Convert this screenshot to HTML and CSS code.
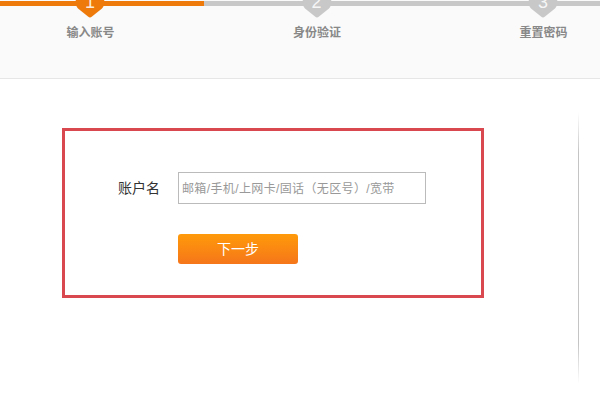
FILE: index.html
```html
<!DOCTYPE html>
<html lang="zh-CN">
<head>
    <meta charset="UTF-8">
    <meta name="viewport" content="width=device-width, initial-scale=1.0">
    <title>找回密码</title>
    <link rel="stylesheet" href="styles.css">
</head>
<body>

    <div class="header">
        <div class="progress">
            <div class="progress-done"></div>
        </div>
        <div class="steps">
            <div class="step active">
                <div class="step-mark">
                    <svg class="step-shape" viewBox="0 0 30 18"><path d="M0.8 0C0.4 4 0.8 6 3 8.4L13 16.6Q15 18.4 17 16.6L27 8.4C29.2 6 29.6 4 29.2 0Z"/></svg>
                    <span class="step-num">1</span>
                </div>
                <div class="step-name">输入账号</div>
            </div>
            <div class="step">
                <div class="step-mark">
                    <svg class="step-shape" viewBox="0 0 30 18"><path d="M0.8 0C0.4 4 0.8 6 3 8.4L13 16.6Q15 18.4 17 16.6L27 8.4C29.2 6 29.6 4 29.2 0Z"/></svg>
                    <span class="step-num">2</span>
                </div>
                <div class="step-name">身份验证</div>
            </div>
            <div class="step">
                <div class="step-mark">
                    <svg class="step-shape" viewBox="0 0 30 18"><path d="M0.8 0C0.4 4 0.8 6 3 8.4L13 16.6Q15 18.4 17 16.6L27 8.4C29.2 6 29.6 4 29.2 0Z"/></svg>
                    <span class="step-num">3</span>
                </div>
                <div class="step-name">重置密码</div>
            </div>
        </div>
    </div>

    <div class="main">
        <form class="account-box">
            <div class="form-row">
                <label class="form-label" for="account">账户名</label>
                <input class="form-input" type="text" id="account" placeholder="邮箱/手机/上网卡/固话（无区号）/宽带">
            </div>
            <button class="next-btn" type="button">下一步</button>
        </form>
        <div class="side-line"></div>
    </div>

</body>
</html>
```

FILE: styles.css
```css
body {
    margin: 0;
    width: 600px;
    height: 401px;
    overflow: hidden;
    background-color: #fff;
    font-family: "Liberation Sans", "Noto Sans CJK SC", sans-serif;
}

.header {
    height: 77px;
    padding-top: 1px;
    position: relative;
    overflow: hidden;
    background-color: #fafafa;
    border-bottom: 1px solid #e6e6e6;
}

.progress {
    height: 5px;
    background-color: #c8c8c8;
}

.progress-done {
    width: 204px;
    height: 100%;
    background-color: #ee7a0c;
}

.steps {
    display: flex;
    gap: 46.5px;
    width: 633px;
}

.step {
    width: 180px;
    flex-shrink: 0;
    text-align: center;
}

/* marker hangs from the top of the page, the number is cut off by the edge */
.step-mark {
    position: absolute;
    top: 0;
    width: 30px;
    height: 18px;
    margin-left: 75px;
}

.step-shape {
    display: block;
    width: 30px;
    height: 18px;
    fill: #c8c8c8;
}

.step.active .step-shape {
    fill: #ee7a0c;
}

.step-num {
    position: absolute;
    top: -7px;
    left: 0;
    width: 100%;
    color: rgba(255, 255, 255, 0.85);
    font-size: 18px;
    line-height: 18px;
}

.step-name {
    margin-top: 18px;
    padding-left: 1px;
    font-size: 12px;
    line-height: 18px;
    font-weight: bold;
    color: #888;
}

.main {
    display: flex;
    padding-left: 62px;
}

.account-box {
    width: 422px;
    height: 170px;
    box-sizing: border-box;
    margin-top: 49px;
    padding-top: 41px;
    border: 3px solid #d9474f;
}

.form-row {
    display: flex;
    align-items: center;
    gap: 18px;
}

.form-label {
    width: 95px;
    padding-bottom: 2px;
    text-align: right;
    font-size: 14px;
    color: #333;
}

.form-input {
    width: 248px;
    height: 32px;
    box-sizing: border-box;
    padding: 2px 3px 0;
    border: 1px solid #bbb;
    font-family: inherit;
    font-size: 12px;
    letter-spacing: 0.37px;
    color: #333;
}

.form-input::placeholder {
    color: #999;
    opacity: 1;
}

.next-btn {
    display: block;
    width: 120px;
    height: 30px;
    margin: 30px 0 0 113px;
    padding: 0 0 2px;
    border: none;
    border-radius: 3px;
    background: linear-gradient(#ff9a0a, #f5761a);
    color: #fff;
    font-family: inherit;
    font-size: 14px;
    cursor: pointer;
}

.side-line {
    width: 1px;
    height: 272px;
    margin: 33px 0 0 94px;
    background: linear-gradient(rgba(190, 190, 190, 0), #c4c4c4 15%, #c4c4c4 85%, rgba(190, 190, 190, 0));
}
```
